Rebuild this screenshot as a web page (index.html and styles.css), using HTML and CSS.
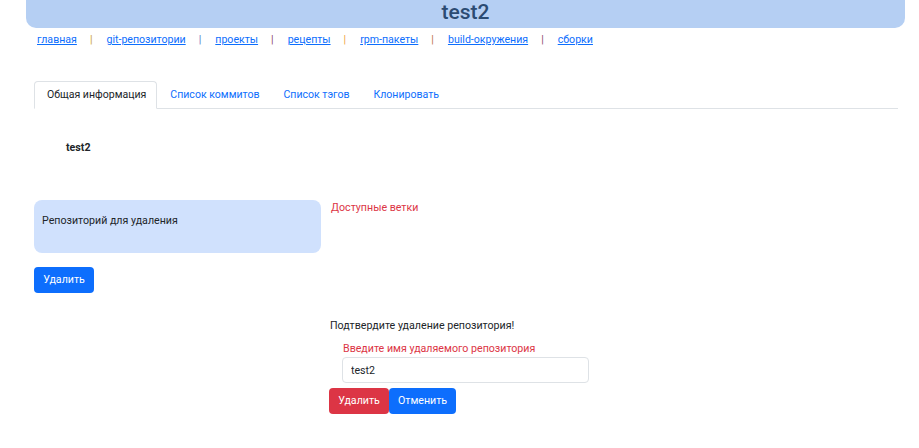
FILE: index.html
```html
<!DOCTYPE html>
<html lang="ru">
<head>
<meta charset="utf-8">
<title>test2</title>
<link rel="stylesheet" href="styles.css">
</head>
<body>
<header class="topbar">test2</header>
<nav class="menu">
  <a href="#">главная</a><span class="sep s1">|</span>
  <a href="#">git-репозитории</a><span class="sep s2">|</span>
  <a href="#">проекты</a><span class="sep s3">|</span>
  <a href="#">рецепты</a><span class="sep s4">|</span>
  <a href="#">rpm-пакеты</a><span class="sep s5">|</span>
  <a href="#">build-окружения</a><span class="sep s6">|</span>
  <a href="#">сборки</a>
</nav>
<main class="main">
  <ul class="tabs">
    <li class="tab active">Общая информация</li>
    <li class="tab">Список коммитов</li>
    <li class="tab">Список тэгов</li>
    <li class="tab">Клонировать</li>
  </ul>
  <div class="repo-name">test2</div>
  <div class="info-row">
    <div class="info-box">Репозиторий для удаления</div>
    <div class="branches">Доступные ветки</div>
  </div>
  <button class="btn btn-primary">Удалить</button>
  <section class="confirm">
    <div class="confirm-title">Подтвердите удаление репозитория!</div>
    <div class="confirm-label">Введите имя удаляемого репозитория</div>
    <input class="confirm-input" type="text" value="test2">
    <div class="confirm-actions">
      <button class="btn btn-danger">Удалить</button><button class="btn btn-primary">Отменить</button>
    </div>
  </section>
</main>
</body>
</html>
```
FILE: styles.css
```css
html, body {
  margin: 0;
  padding: 0;
  background: #fff;
}
body {
  font-family: Roboto, "Liberation Sans", sans-serif;
  font-size: 10.65px;
  line-height: 18px;
  color: #212529;
}
.topbar {
  margin: 0 14px 0 26px;
  height: 28px;
  background: #b5cff3;
  border-radius: 0 0 10px 10px;
  text-align: center;
  font-size: 21px;
  line-height: 24px;
  font-weight: 500;
  color: #2b4b72;
}
.menu {
  display: flex;
  align-items: baseline;
  margin-top: 5px;
  padding-left: 37px;
  font-size: 10.6px;
  line-height: 14px;
}
.menu a {
  color: #0d6efd;
  text-decoration: underline;
}
.sep {
  margin: 0 14px 0 13px;
  color: #999;
}
.s1 { color: #c8a030; }
.s2 { color: #5a78c8; }
.s3 { color: #8c4a6a; }
.s4 { color: #f0a040; }
.s5 { color: #c07048; }
.s6 { color: #8c4a6a; }
.main {
  padding: 0 21px 0 34px;
}
.tabs {
  list-style: none;
  margin: 34px 0 0 0;
  padding: 0;
  display: flex;
  border-bottom: 1px solid #dee2e6;
  font-size: 10.55px;
}
.tab {
  padding: 4px 10px 4px 12px;
  margin-bottom: -1px;
  border: 1px solid transparent;
  border-radius: 4px 4px 0 0;
  color: #0d6efd;
}
.tab.active {
  color: #212529;
  background: #fff;
  border-color: #dee2e6 #dee2e6 #fff;
}
.repo-name {
  margin: 30px 0 0 32px;
  font-weight: 700;
}
.info-row {
  display: flex;
  align-items: flex-start;
  margin-top: 43px;
  gap: 10px;
}
.info-box {
  width: 271px;
  height: 41px;
  padding: 12px 8px 0 8px;
  background: #d0e1fd;
  border-radius: 8px;
}
.branches {
  color: #dc3545;
  margin-top: -1px;
}
.btn {
  font-family: Roboto, "Liberation Sans", sans-serif;
  font-size: 10.65px;
  line-height: 18px;
  padding: 4px 9px;
  border: 0;
  border-radius: 4px;
  color: #fff;
  cursor: pointer;
}
.btn-primary {
  background: #0d6efd;
}
.btn-danger {
  background: #dc3545;
}
.main > .btn {
  margin-top: 14px;
  display: block;
  width: 60px;
  height: 26px;
}
.confirm {
  margin: 24px 0 0 296px;
}
.confirm-label {
  margin: 5px 0 0 13px;
  color: #dc3545;
}
.confirm-input {
  display: block;
  box-sizing: border-box;
  margin: -1px 0 0 12px;
  width: 247px;
  height: 26px;
  padding: 0 8px;
  border: 1px solid #dee2e6;
  border-radius: 4px;
  font-family: Roboto, "Liberation Sans", sans-serif;
  font-size: 10.65px;
  color: #212529;
}
.confirm-actions {
  display: flex;
  margin-top: 5px;
  margin-left: -1px;
}
.confirm-actions .btn {
  height: 26px;
}
.confirm-actions .btn-danger {
  width: 60px;
}
.confirm-actions .btn-primary {
  width: 67px;
}
```
